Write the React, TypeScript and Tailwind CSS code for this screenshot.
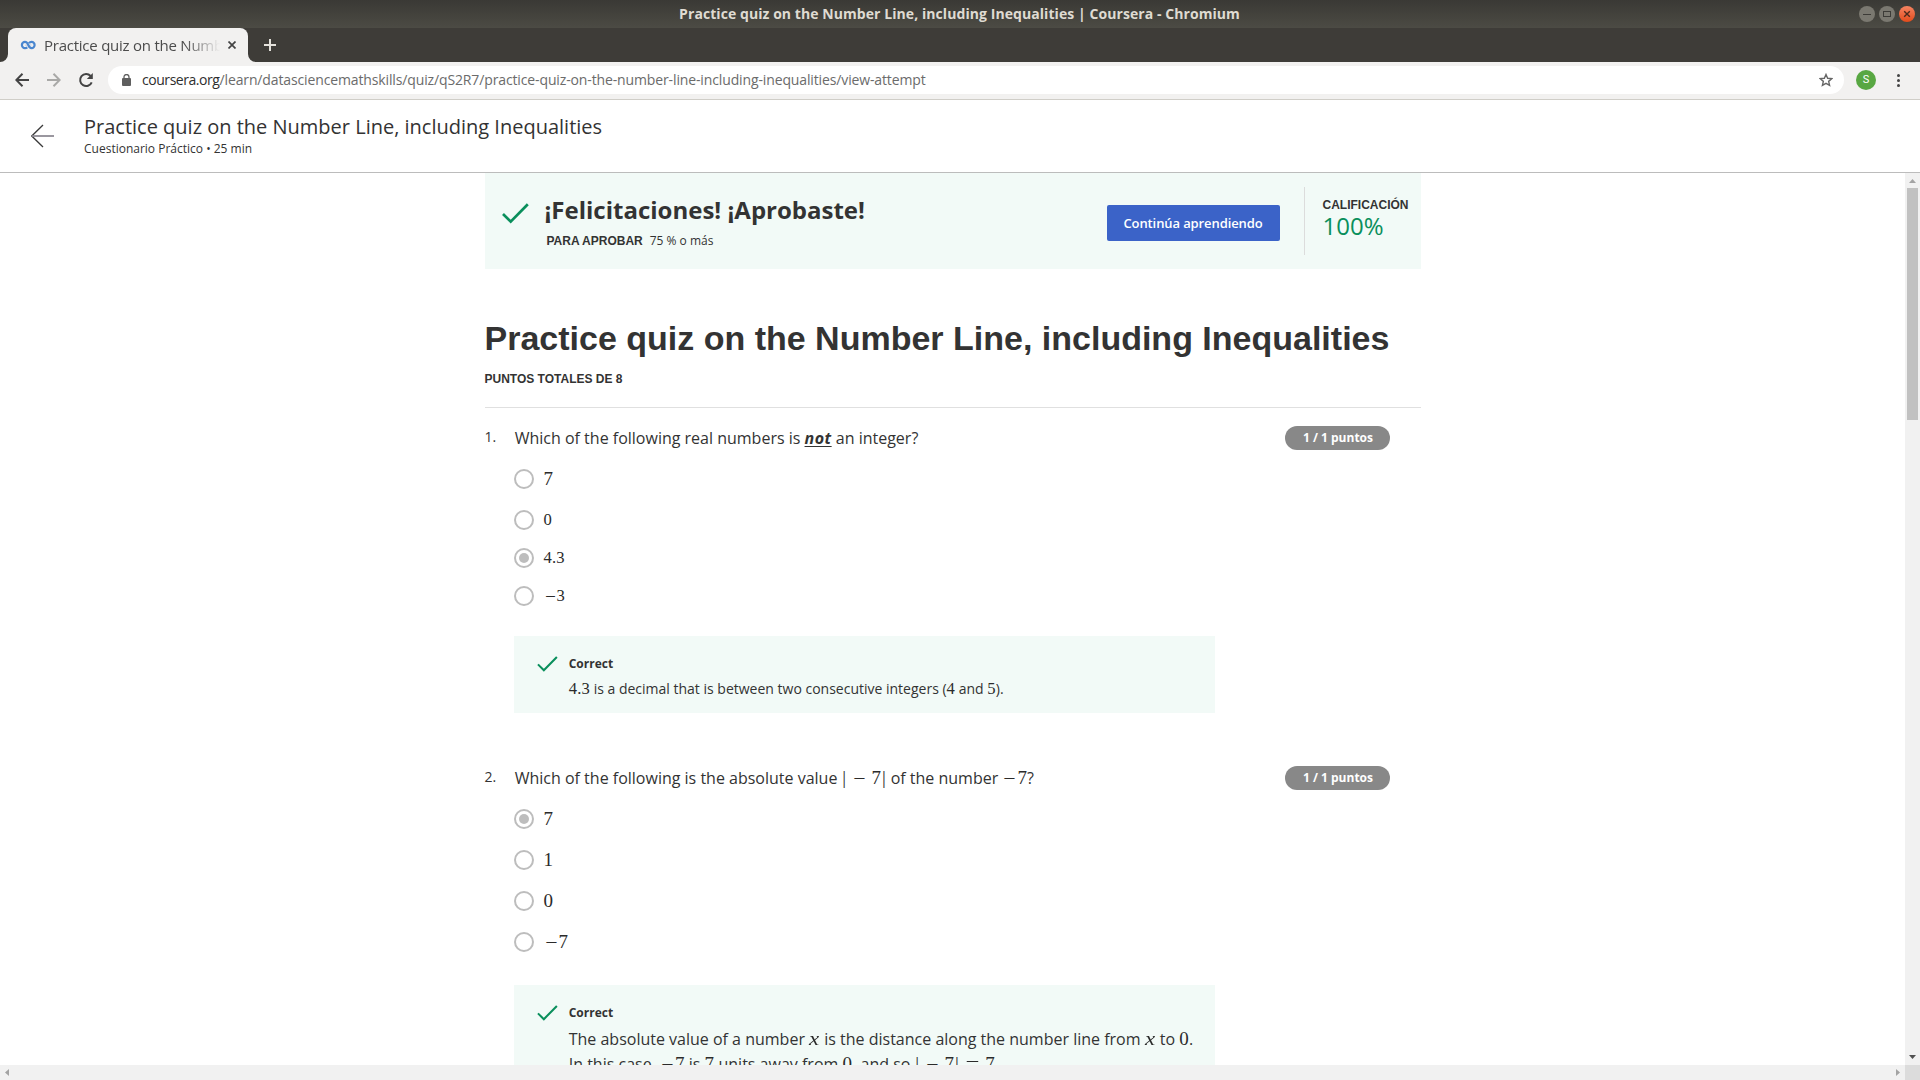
import type { ReactNode } from 'react';

/* ---------- math tokens ---------- */

function M({ children, small = false }: { children: ReactNode; small?: boolean }) {
  return (
    <span
      className={
        small
          ? "font-['Liberation_Serif',serif] text-[16.6px] leading-[0] tracking-[0.2px] text-[#2b2b2b]"
          : "font-['Liberation_Serif',serif] text-[19px] leading-[0] tracking-[0.2px] text-[#2b2b2b]"
      }
    >
      {children}
    </span>
  );
}

function Minus() {
  return <span className="inline-block w-[0.79em] origin-center translate-y-px scale-x-[1.15] text-center leading-[0]">−</span>;
}

function SpacedMinus() {
  return <span className="ml-[0.28em] mr-[0.22em]"><Minus /></span>;
}

function Bar() {
  return <span className="inline-block w-[5.4px] text-center leading-[0] tracking-normal">|</span>;
}

function VarX() {
  return <span className="inline-block w-[11px] origin-left scale-x-[1.2] text-left italic leading-[0]">x</span>;
}

/* ---------- shared pieces ---------- */

function Check({ className }: { className: string }) {
  return (
    <svg className={className} viewBox="0 0 27 21" fill="none" stroke="#0a8f5c" strokeWidth="2.7">
      <path d="M1 11 L8.7 18.6 L25.8 1.2" />
    </svg>
  );
}

function Option({ children, selected = false, className = '' }: { children: ReactNode; selected?: boolean; className?: string }) {
  return (
    <div className={`flex h-5 items-center ${className}`}>
      <span className="flex size-5 shrink-0 items-center justify-center rounded-full border-2 border-[#bdbdbd] bg-white">
        {selected && <span className="size-[10px] rounded-full bg-[#bdbdbd]" />}
      </span>
      <span className="ml-[9.5px] whitespace-pre leading-5">{children}</span>
    </div>
  );
}

function Question({ n, title, children }: { n: number; title: ReactNode; children: ReactNode }) {
  return (
    <section className="flex items-start">
      <span className="-mt-px w-[29.5px] shrink-0 text-[14px] leading-6">{n}.</span>
      <div className="w-[771px] shrink-0">
        <h2 className="h-6 whitespace-pre pl-[0.7px] text-[16px] leading-6">{title}</h2>
        {children}
      </div>
      <span className="flex h-6 w-[105px] items-center justify-center rounded-full bg-[#888] pl-px text-[12px] font-bold text-white">
        1 / 1 puntos
      </span>
    </section>
  );
}

function Feedback({ children, className }: { children: ReactNode; className: string }) {
  return (
    <div className={`flex w-[701px] bg-[#f2faf7] pl-[22.5px] ${className}`}>
      <Check className="mt-[20px] h-[16px] w-[21px] shrink-0" />
      <div className="ml-[11.2px] pt-[18px]">
        <div className="h-5 text-[12px] font-bold leading-5">Correct</div>
        {children}
      </div>
    </div>
  );
}

/* ---------- window chrome ---------- */

function TitleBar() {
  return (
    <div className="flex h-7 shrink-0 items-center bg-linear-to-b from-[#3a3935] to-[#4c4b44]">
      <div className="w-[74px]" />
      <div className="flex-1 whitespace-pre pr-[1px] text-center font-['Open_Sans',sans-serif] text-[14px] font-bold leading-7 tracking-[0.07px] text-[#dfdbd2]">
        Practice quiz on the Number Line, including Inequalities | Coursera - Chromium
      </div>
      <div className="flex w-[74px] gap-1 pl-[13px]">
        <svg className="size-4" viewBox="0 0 16 16">
          <circle cx="8" cy="8" r="8" fill="#7a7870" />
          <path d="M4 8.5h8" stroke="#3c3b37" />
        </svg>
        <svg className="size-4" viewBox="0 0 16 16">
          <circle cx="8" cy="8" r="8" fill="#7a7870" />
          <rect x="4.5" y="5.5" width="7" height="5" fill="none" stroke="#3c3b37" />
        </svg>
        <svg className="size-4" viewBox="0 0 16 16">
          <defs>
            <linearGradient id="close" x1="0" y1="0" x2="0" y2="1">
              <stop offset="0" stopColor="#f58462" />
              <stop offset="1" stopColor="#e24b1b" />
            </linearGradient>
          </defs>
          <circle cx="8" cy="8" r="8" fill="url(#close)" />
          <path d="M5.2 5.2l5.6 5.6M10.8 5.2l-5.6 5.6" stroke="#4a2a1c" strokeWidth="1.4" />
        </svg>
      </div>
    </div>
  );
}

function TabStrip() {
  return (
    <div className="flex h-[34px] shrink-0 items-end bg-[#3e3c38]">
      <svg className="size-2" viewBox="0 0 8 8" fill="#f2f1f0"><path d="M8 0v8H0A8 8 0 0 0 8 0z" /></svg>
      <div className="flex h-[34px] w-[240px] items-center rounded-t-lg bg-[#f2f1f0] pl-3">
        <svg className="h-[10px] w-4 shrink-0" viewBox="0 0 16 10" fill="none" stroke="#4a86cf" strokeWidth="2.2">
          <path d="M7.300 7.300C6.600 7.900 5.800 8.100 5 8.100A3.100 3.100 0 0 1 5 1.900C6.800 1.900 7.600 3.200 8.300 5S10 8.100 11.500 8.100a3.100 3.100 0 0 0 0-6.200c-1 0-1.900.4-2.600 1.200" />
          <path d="M5.200 5.200h1.600M10 5h1.400" strokeWidth="1" opacity="0.35" />
        </svg>
        <span className="ml-2 w-44 overflow-hidden whitespace-pre mask-r-from-80% mask-r-to-100% font-['Open_Sans',sans-serif] text-[15px] leading-6 tracking-[-0.24px] text-[#4c4c4c]">
          Practice quiz on the Numb
        </span>
        <svg className="ml-2 size-2" viewBox="0 0 8 8" stroke="#444" strokeWidth="1.7"><path d="M.5.5l7 7M7.500.5l-7 7" /></svg>
      </div>
      <svg className="size-2" viewBox="0 0 8 8" fill="#f2f1f0"><path d="M0 0v8h8A8 8 0 0 1 0 0z" /></svg>
      <svg className="mb-[11px] ml-2 size-3" viewBox="0 0 12 12" stroke="#e4e2dc" strokeWidth="2"><path d="M6 0v12M0 6h12" /></svg>
    </div>
  );
}

function Toolbar() {
  return (
    <div className="flex h-[38px] shrink-0 items-center border-b border-[#d0cec8] bg-[#f2f1f0] pb-px pl-[15px]">
      <svg className="size-[14px]" viewBox="0 0 14 14" fill="none" stroke="#444" strokeWidth="2"><path d="M14 7H1.500M7.500.7L1.300 7l6.200 6.300" /></svg>
      <svg className="ml-[18px] size-[14px]" viewBox="0 0 14 14" fill="none" stroke="#a9a9a7" strokeWidth="2"><path d="M0 7h12.500M6.500.7L12.700 7l-6.200 6.300" /></svg>
      <svg className="ml-[17px] size-4" viewBox="0 0 16 16" fill="none" stroke="#444" strokeWidth="2">
        <path d="M13.700 10.300A6 6 0 1 1 12.600 4" />
        <path d="M14.800 1v6h-6z" fill="#444" stroke="none" />
      </svg>
      <div className="ml-[14px] flex h-7 w-[1736px] items-center rounded-full bg-white pl-[14px]">
        <svg className="h-3 w-[9px]" viewBox="0 0 9 12" fill="none">
          <rect x="0" y="4" width="9" height="8" rx="1" fill="#5f5f5f" />
          <path d="M2 5V3a2.500 2.500 0 0 1 5 0v2" stroke="#5f5f5f" strokeWidth="1.300" />
        </svg>
        <span className="ml-[11px] flex-1 whitespace-pre font-['Open_Sans',sans-serif] text-[14px] leading-7 text-[#6b6b6b]">
          <span className="tracking-[-0.45px] text-[#2e2e2e]">coursera.org</span>
          <span className="tracking-[-0.13px]">/learn/datasciencemathskills/quiz/qS2R7/practice-quiz-on-the-number-line-including-inequalities/view-attempt</span>
        </span>
        <svg className="mr-[11px] size-[14px]" viewBox="0 0 14 14" fill="none" stroke="#666" strokeWidth="1.400">
          <path d="M7 1.500l1.650 3.800 4.100.36-3.100 2.700.93 4.050L7 10.300l-3.580 2.110.93-4.050-3.100-2.700 4.100-.36z" />
        </svg>
      </div>
      <div className="ml-3 flex size-5 items-center justify-center rounded-full bg-[#58a742] font-['Roboto',sans-serif] text-[11px] text-white">S</div>
      <div className="ml-[21px] flex flex-col gap-[2px]">
        <i className="size-[3px] rounded-full bg-[#444]" />
        <i className="size-[3px] rounded-full bg-[#444]" />
        <i className="size-[3px] rounded-full bg-[#444]" />
      </div>
    </div>
  );
}

function PageHeader() {
  return (
    <header className="flex h-[73px] shrink-0 border-b border-[#bcbcbc] bg-white pl-[31px]">
      <svg className="mt-[24px] h-6 w-[23px]" viewBox="0 0 23 24" fill="none">
        <path d="M12 1L.8 12 12 23" stroke="#3a3a3a" strokeWidth="1.300" />
        <path d="M1 12h22" stroke="#8f8c95" strokeWidth="1.800" />
      </svg>
      <div className="ml-[30px] pt-[13px]">
        <div className="h-[27px] text-[20px] leading-[28px]">Practice quiz on the Number Line, including Inequalities</div>
        <div className="text-[12px] leading-[18px]">Cuestionario Práctico • 25 min</div>
      </div>
    </header>
  );
}

function ResultBanner() {
  return (
    <div className="flex h-24 items-start bg-[#f2faf7]">
      <Check className="ml-[17px] mt-[29.5px] h-[21px] w-[27px] shrink-0" />
      <div className="ml-[16px] w-[562.5px] pt-[21px]">
        <div className="h-[37px] text-[24px] font-bold leading-8">¡Felicitaciones! ¡Aprobaste!</div>
        <div className="flex items-baseline gap-[7px] pl-[2px] text-[12px] leading-5">
          <span className="font-['Liberation_Sans',sans-serif] font-bold">PARA APROBAR</span>
          <span>75 % o más</span>
        </div>
      </div>
      <button className="mt-8 h-9 w-[173px] rounded-[2px] bg-[#3b63c8] pr-px pt-px text-[13px] font-semibold tracking-[-0.1px] text-white">
        Continúa aprendiendo
      </button>
      <div className="ml-[24px] mt-[14px] h-[68px] w-px bg-[#dcdcdc]" />
      <div className="ml-[17.5px] pt-6">
        <div className="h-[15px] font-['Liberation_Sans',sans-serif] text-[12px] font-bold leading-4">CALIFICACIÓN</div>
        <div className="text-[24px] leading-7 text-[#0a8f5c]">100%</div>
      </div>
    </div>
  );
}

function Quiz() {
  return (
    <main className="ml-[484.5px] w-[936px]">
      <ResultBanner />
      <h1 className="mt-[49px] h-10 whitespace-nowrap font-['Liberation_Sans',sans-serif] text-[34px] font-bold leading-10">
        Practice quiz on the Number Line, including Inequalities
      </h1>
      <div className="mt-[13px] h-4 font-['Liberation_Sans',sans-serif] text-[12px] font-bold leading-4">PUNTOS TOTALES DE 8</div>
      <hr className="mb-[18px] mt-5 border-[#e0e0e0]" />

      <Question
        n={1}
        title={<>Which of the following real numbers is <b className="italic tracking-[0.5px] underline underline-offset-2">not</b> an integer?</>}
      >
        <Option className="mt-[19px]"><M>7</M></Option>
        <Option className="mt-[21px] *:last:-mt-[2px]"><M small>0</M></Option>
        <Option className="mt-[18px] *:last:-mt-[2px]" selected><M small>4.3</M></Option>
        <Option className="mt-[18px] *:last:-mt-[2px]"><M small><Minus />3</M></Option>
        <Feedback className="mt-[30px] h-[77px]">
          <p className="mt-[5px] whitespace-pre text-[14px] leading-5">
            <M small>4.3</M> is a decimal that is between two consecutive integers (<M small>4</M> and <M small>5</M>).
          </p>
        </Feedback>
      </Question>

      <div className="h-[53px]" />

      <Question
        n={2}
        title={<>Which of the following is the absolute value <M><Bar /><SpacedMinus />7<Bar /></M> of the number <M><Minus />7</M>?</>}
      >
        <Option className="mt-[19px]" selected><M>7</M></Option>
        <Option className="mt-[21px]"><M>1</M></Option>
        <Option className="mt-[21px]"><M>0</M></Option>
        <Option className="mt-[21px]"><M><Minus />7</M></Option>
        <Feedback className="mt-[33px] h-[110px]">
          <p className="mt-1 whitespace-pre text-[16px] leading-[25px]">
            The absolute value of a number <M><VarX /></M> is the distance along the number line from <M><VarX /></M> to <M>0</M>.
          </p>
          <p className="whitespace-pre text-[16px] leading-[25px]">
            In this case, <M><Minus />7</M> is <M>7</M> units away from <M>0</M>, and so <M><Bar /><SpacedMinus />7<Bar /><span className="mx-[0.28em] inline-block w-[15px] origin-center scale-x-[1.3] text-center leading-[0]">=</span>7</M>.
          </p>
        </Feedback>
      </Question>
    </main>
  );
}

function VerticalScrollbar() {
  return (
    <div className="flex w-[15px] shrink-0 flex-col items-center bg-[#f1f1f1]">
      <svg className="mt-[6px] h-1 w-[7px]" viewBox="0 0 7 4" fill="#a3a3a3"><path d="M0 4L3.500 0 7 4z" /></svg>
      <div className="mt-[5px] h-[232px] w-[11px] bg-[#c1c1c1]" />
      <svg className="mb-[6px] mt-auto h-1 w-[7px]" viewBox="0 0 7 4" fill="#505050"><path d="M0 0L3.500 4 7 0z" /></svg>
    </div>
  );
}

function HorizontalScrollbar() {
  return (
    <div className="flex h-[15px] shrink-0 items-center bg-[#f1f1f1] pl-[5px]">
      <svg className="h-[7px] w-1" viewBox="0 0 4 7" fill="#a3a3a3"><path d="M4 0L0 3.500 4 7z" /></svg>
      <svg className="ml-auto mr-[5px] h-[7px] w-1" viewBox="0 0 4 7" fill="#a3a3a3"><path d="M0 0l4 3.500L0 7z" /></svg>
      <div className="h-[15px] w-[15px] bg-[#dcdcdc]" />
    </div>
  );
}

export default function App() {
  return (
    <div className="flex h-[1080px] w-[1920px] flex-col overflow-hidden bg-white font-['Open_Sans',sans-serif] text-[#333]">
      <TitleBar />
      <TabStrip />
      <Toolbar />
      <PageHeader />
      <div className="flex h-[892px] shrink-0">
        <div className="flex-1 overflow-hidden">
          <Quiz />
        </div>
        <VerticalScrollbar />
      </div>
      <HorizontalScrollbar />
    </div>
  );
}
